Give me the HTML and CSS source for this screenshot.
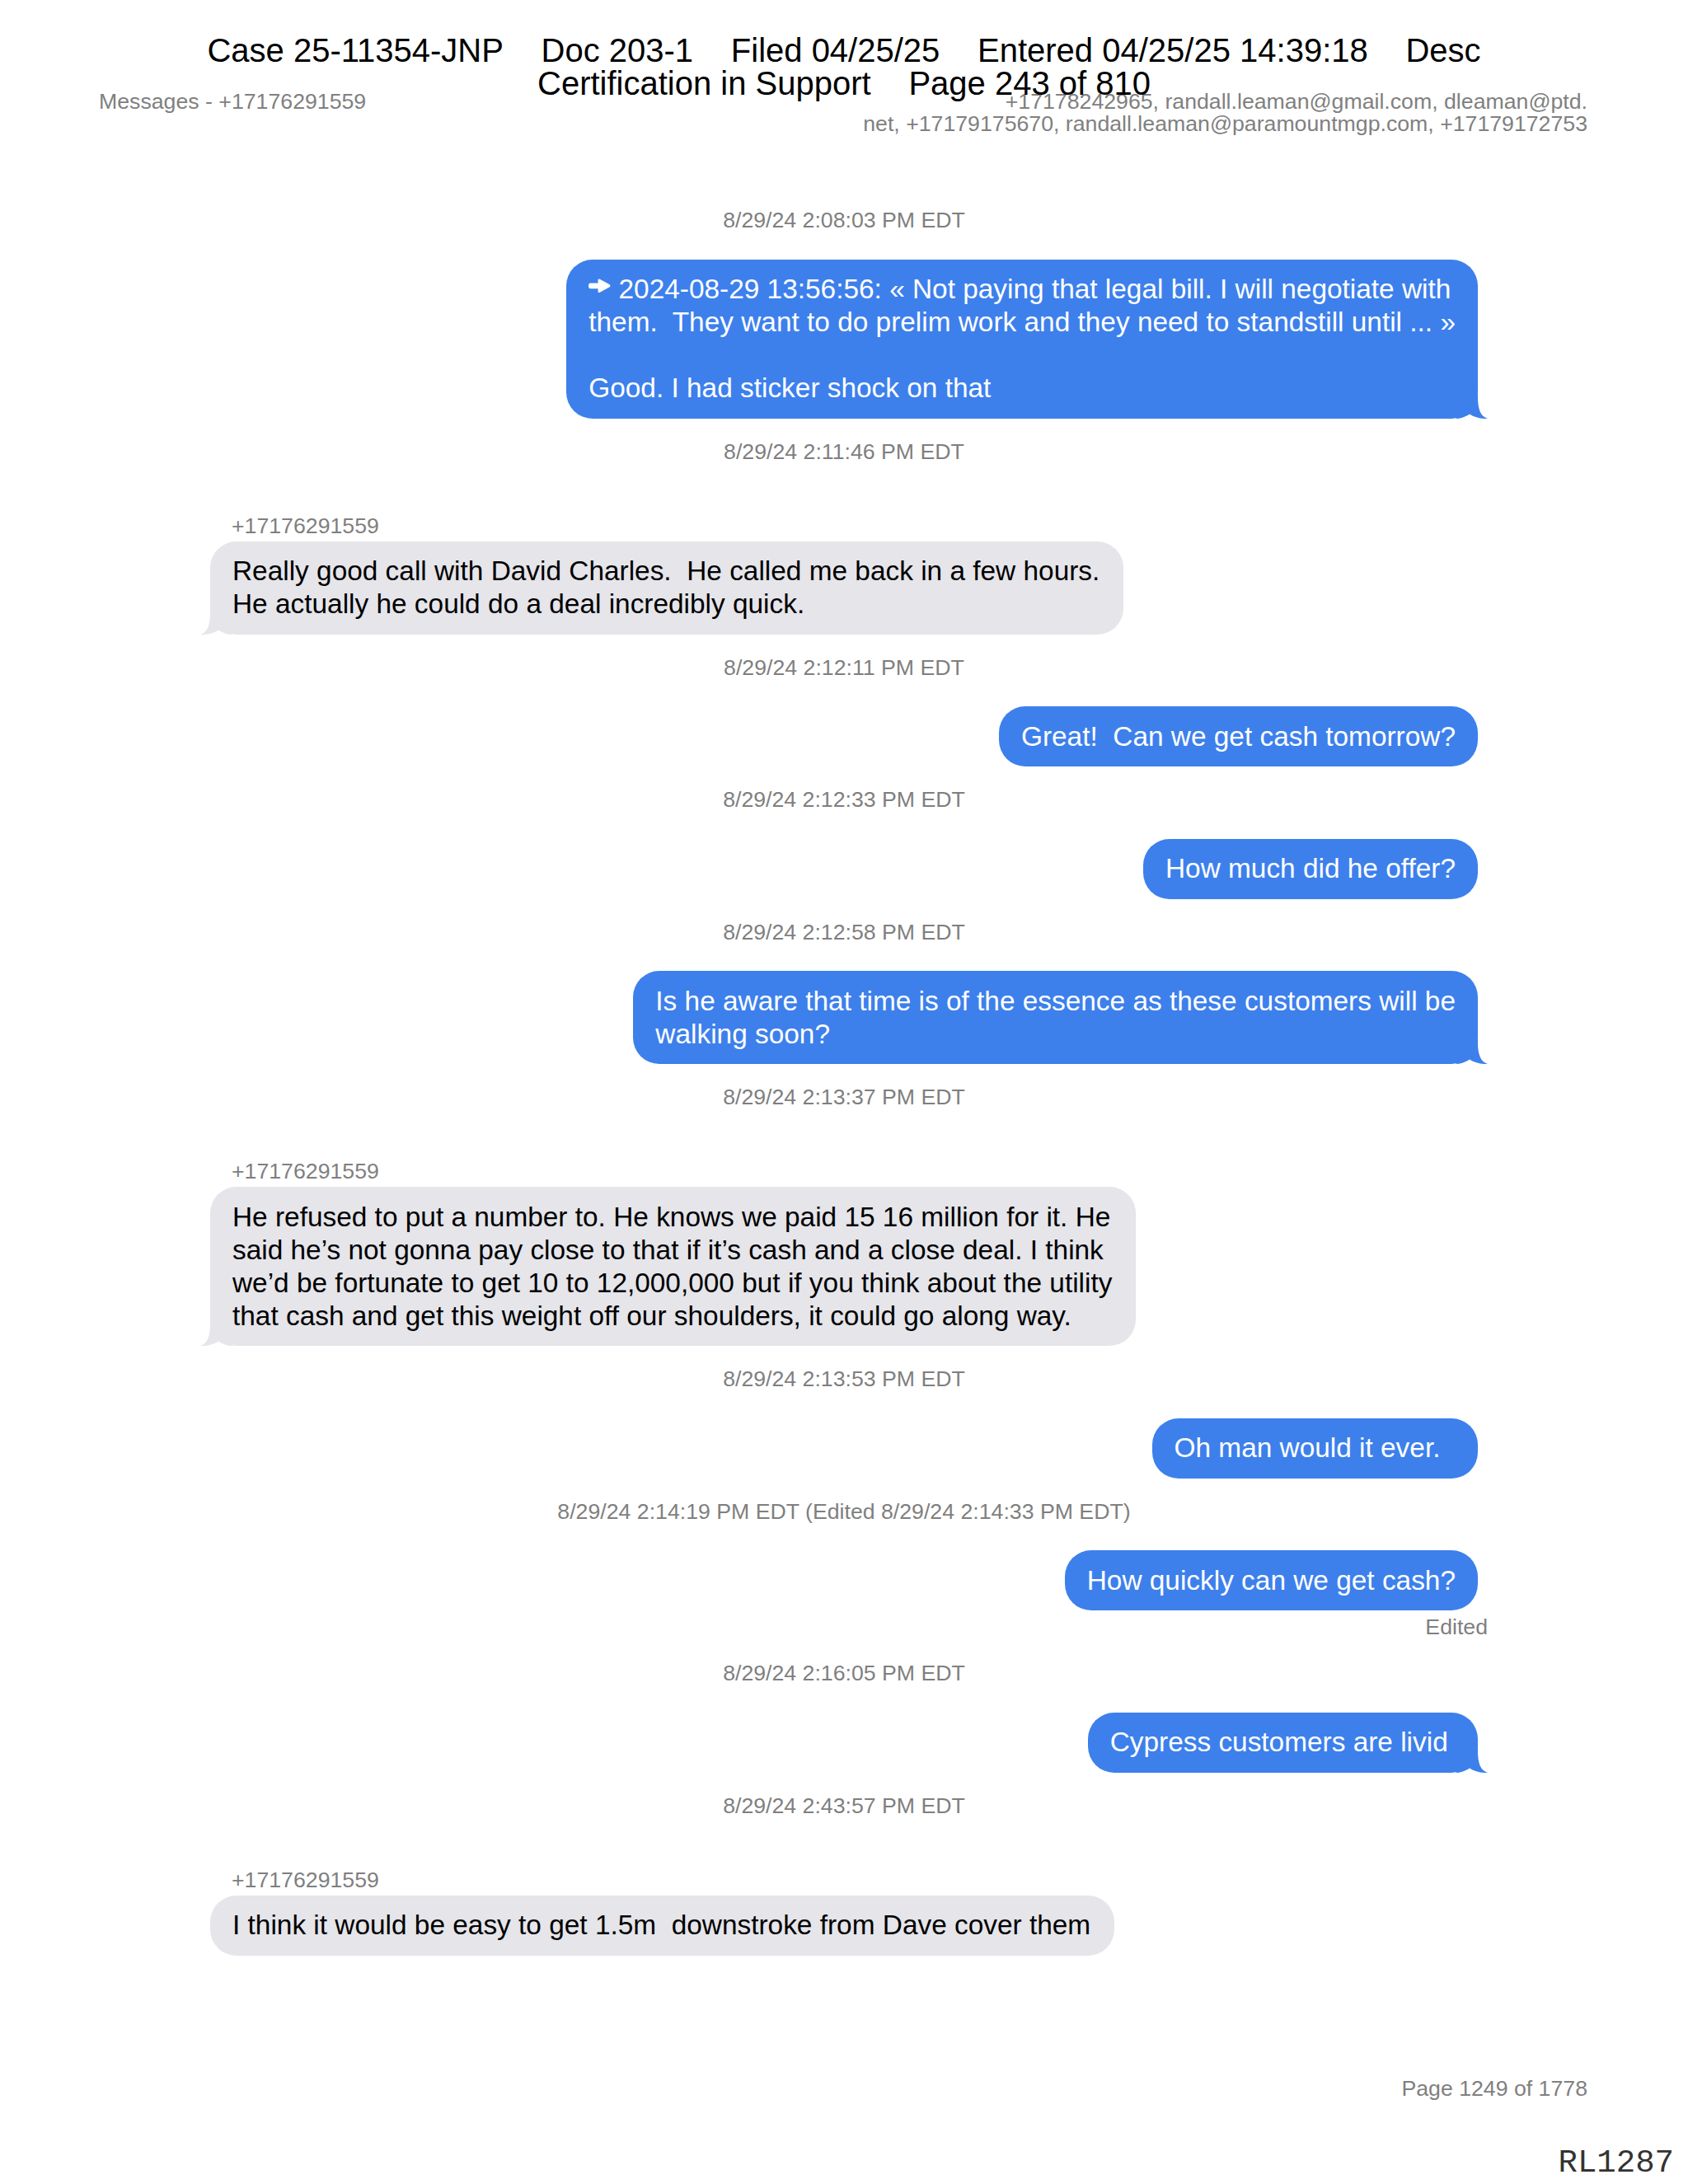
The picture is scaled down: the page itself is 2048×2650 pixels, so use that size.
FILE: index.html
```html
<!DOCTYPE html>
<html lang="en">
<head>
<meta charset="utf-8">
<title>Messages - +17176291559</title>
<link rel="stylesheet" href="styles.css">
</head>
<body>
<div class="page">
  <div class="court-stamp">
    <div class="stamp-line"><span>Case 25-11354-JNP</span><span>Doc 203-1</span><span>Filed 04/25/25</span><span>Entered 04/25/25 14:39:18</span><span>Desc</span></div>
    <div class="stamp-line"><span>Certification in Support</span><span>Page 243 of 810</span></div>
  </div>

  <header class="conv-head">
    <div class="conv-title">Messages - +17176291559</div>
    <div class="participants">+17178242965, randall.leaman@gmail.com, dleaman@ptd.<br>net, +17179175670, randall.leaman@paramountmgp.com, +17179172753</div>
  </header>

  <main class="thread">
    <section class="msg">
      <div class="ts">8/29/24 2:08:03 PM EDT</div>
      <div class="row sent">
        <div class="bubble"><svg class="fwd" viewBox="0 0 28 18" width="28" height="18" aria-hidden="true"><path d="M2.5 5.5 H12 V2 Q12 -0.4 14.3 0.8 L26.6 7.5 Q28.3 9 26.6 10.5 L14.3 17.2 Q12 18.4 12 16 V12.5 H2.5 Q0 12.5 0 9 Q0 5.5 2.5 5.5 Z" fill="#fff"/></svg> 2024-08-29 13:56:56: « Not paying that legal bill. I will negotiate with<br>them.  They want to do prelim work and they need to standstill until ... »<br><br>Good. I had sticker shock on that<svg class="tail" viewBox="0 0 38 30" width="38" height="30" aria-hidden="true"><path d="M0 0 H26 V4 C26 18 29 27 38 30 C31 30.5 22 28.5 16 24.5 C11 28 5 30 0 30 Z"/></svg></div>
      </div>
    </section>

    <section class="msg">
      <div class="ts">8/29/24 2:11:46 PM EDT</div>
      <div class="sender">+17176291559</div>
      <div class="row recv">
        <div class="bubble">Really good call with David Charles.  He called me back in a few hours.<br>He actually he could do a deal incredibly quick.<svg class="tail" viewBox="0 0 38 30" width="38" height="30" aria-hidden="true"><path d="M0 0 H26 V4 C26 18 29 27 38 30 C31 30.5 22 28.5 16 24.5 C11 28 5 30 0 30 Z"/></svg></div>
      </div>
    </section>

    <section class="msg">
      <div class="ts">8/29/24 2:12:11 PM EDT</div>
      <div class="row sent">
        <div class="bubble">Great!  Can we get cash tomorrow?</div>
      </div>
    </section>

    <section class="msg">
      <div class="ts">8/29/24 2:12:33 PM EDT</div>
      <div class="row sent">
        <div class="bubble">How much did he offer?</div>
      </div>
    </section>

    <section class="msg">
      <div class="ts">8/29/24 2:12:58 PM EDT</div>
      <div class="row sent">
        <div class="bubble">Is he aware that time is of the essence as these customers will be<br>walking soon?<svg class="tail" viewBox="0 0 38 30" width="38" height="30" aria-hidden="true"><path d="M0 0 H26 V4 C26 18 29 27 38 30 C31 30.5 22 28.5 16 24.5 C11 28 5 30 0 30 Z"/></svg></div>
      </div>
    </section>

    <section class="msg">
      <div class="ts">8/29/24 2:13:37 PM EDT</div>
      <div class="sender">+17176291559</div>
      <div class="row recv">
        <div class="bubble">He refused to put a number to. He knows we paid 15 16 million for it. He<br>said he’s not gonna pay close to that if it’s cash and a close deal. I think<br>we’d be fortunate to get 10 to 12,000,000 but if you think about the utility<br>that cash and get this weight off our shoulders, it could go along way.<svg class="tail" viewBox="0 0 38 30" width="38" height="30" aria-hidden="true"><path d="M0 0 H26 V4 C26 18 29 27 38 30 C31 30.5 22 28.5 16 24.5 C11 28 5 30 0 30 Z"/></svg></div>
      </div>
    </section>

    <section class="msg">
      <div class="ts">8/29/24 2:13:53 PM EDT</div>
      <div class="row sent">
        <div class="bubble">Oh man would it ever.  </div>
      </div>
    </section>

    <section class="msg">
      <div class="ts">8/29/24 2:14:19 PM EDT (Edited 8/29/24 2:14:33 PM EDT)</div>
      <div class="row sent">
        <div class="bubble">How quickly can we get cash?</div>
      </div>
      <div class="edited">Edited</div>
    </section>

    <section class="msg">
      <div class="ts">8/29/24 2:16:05 PM EDT</div>
      <div class="row sent">
        <div class="bubble">Cypress customers are livid <svg class="tail" viewBox="0 0 38 30" width="38" height="30" aria-hidden="true"><path d="M0 0 H26 V4 C26 18 29 27 38 30 C31 30.5 22 28.5 16 24.5 C11 28 5 30 0 30 Z"/></svg></div>
      </div>
    </section>

    <section class="msg">
      <div class="ts">8/29/24 2:43:57 PM EDT</div>
      <div class="sender">+17176291559</div>
      <div class="row recv">
        <div class="bubble">I think it would be easy to get 1.5m  downstroke from Dave cover them</div>
      </div>
    </section>
  </main>

  <footer class="page-no">Page 1249 of 1778</footer>

  <div class="bates">RL1287</div>
</div>
</body>
</html>
```

FILE: styles.css
```css
html, body {
  margin: 0;
  padding: 0;
  background: #ffffff;
}

.page {
  position: relative;
  width: 2048px;
  height: 2650px;
  box-sizing: border-box;
  padding: 110px 122px 0 120px;
  font-family: "Liberation Sans", Arial, Helvetica, sans-serif;
  color: #000;
  overflow: hidden;
}

/* Court filing stamp, overlays the page */
.court-stamp {
  position: absolute;
  top: 42px;
  left: 0;
  right: 0;
  font-size: 40px;
  line-height: 39.5px;
  color: #000;
  z-index: 2;
}

.stamp-line {
  display: flex;
  justify-content: center;
  gap: 45.7px;
  white-space: nowrap;
}

/* Conversation header */
.conv-head {
  display: flex;
  justify-content: space-between;
  align-items: flex-start;
  font-size: 26.7px;
  line-height: 27px;
  color: #808080;
}

.participants {
  text-align: right;
  white-space: nowrap;
}

/* Thread */
.thread {
  width: 1538px;
  margin: 87px 0 0 135px;
}

.ts {
  text-align: center;
  font-size: 26.7px;
  line-height: 32px;
  color: #7f7f7f;
  white-space: nowrap;
}

.msg + .msg .ts {
  margin-top: 24px;
}

.sender {
  margin-top: 58px;
  padding-left: 26px;
  font-size: 26.7px;
  line-height: 32px;
  color: #7f7f7f;
}

.row {
  display: flex;
}

.ts + .row {
  margin-top: 31.5px;
}

.sender + .row {
  margin-top: 3px;
}

.row.sent {
  justify-content: flex-end;
}

.row.recv {
  justify-content: flex-start;
}

.bubble {
  position: relative;
  padding: 16.5px 27px;
  border-radius: 32px;
  font-size: 33.4px;
  line-height: 40px;
  white-space: pre;
}

.recv .bubble {
  padding-right: 29px;
}

.sent .bubble {
  background: #3d80ec;
  color: #ffffff;
}

.recv .bubble {
  background: #e5e5ea;
  color: #000000;
}

.fwd {
  display: inline-block;
  vertical-align: 7px;
  width: 27px;
  height: 17.5px;
}

.tail {
  position: absolute;
  bottom: 0;
  width: 38px;
  height: 30px;
}

.sent .tail {
  right: -12px;
  fill: #3d80ec;
}

.recv .tail {
  left: -12px;
  transform: scaleX(-1);
  fill: #e5e5ea;
}

.edited {
  margin: 4px -12px 0 0;
  text-align: right;
  font-size: 26.7px;
  line-height: 32px;
  color: #7f7f7f;
}

/* Footer */
.page-no {
  margin-top: 145px;
  text-align: right;
  font-size: 26.7px;
  line-height: 32px;
  color: #808080;
}

.bates {
  position: absolute;
  top: 2605px;
  right: 17px;
  font-family: "Liberation Mono", "Courier New", monospace;
  font-size: 39px;
  line-height: 40px;
  color: #333;
}
```
